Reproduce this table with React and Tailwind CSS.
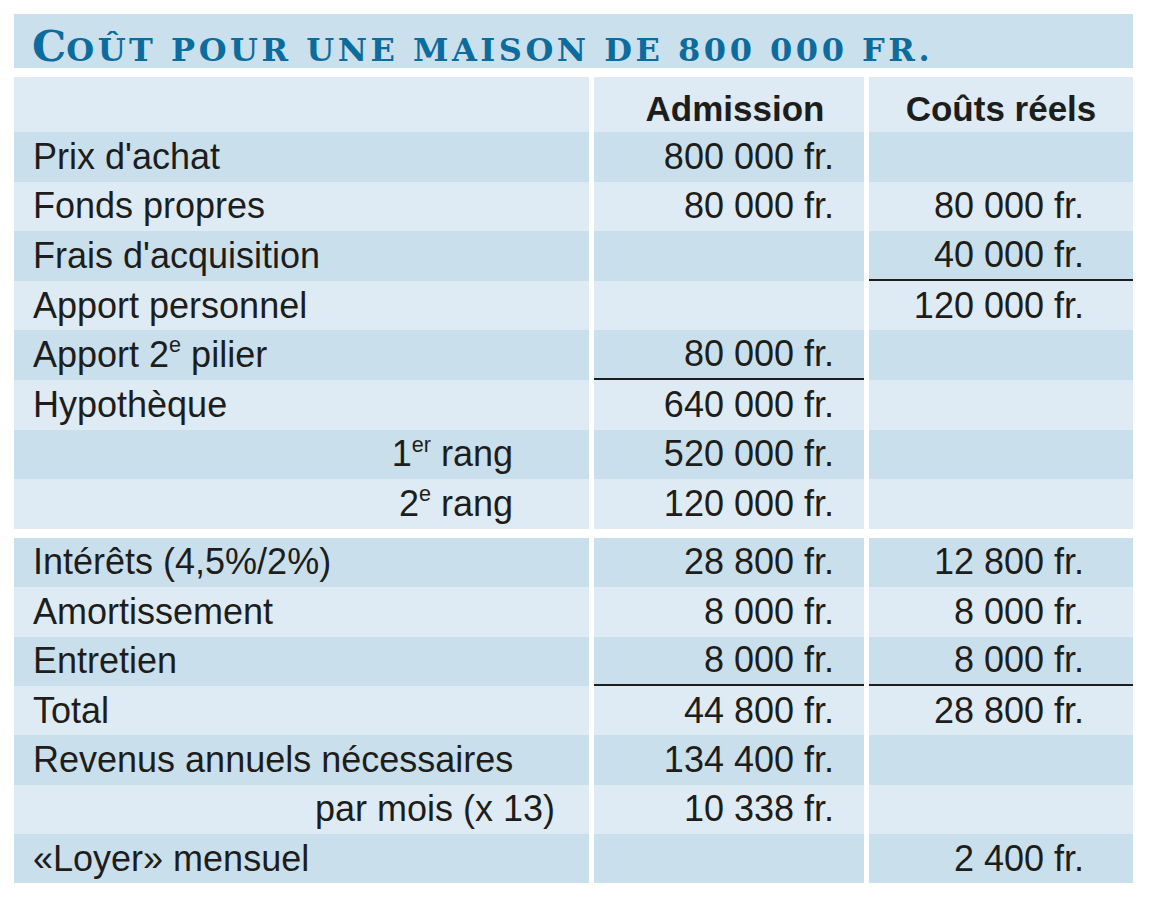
import React from "react";

const dark = "bg-[#c9dfec]";
const light = "bg-[#deebf5]";

const Sup = ({ children }) => (
  <sup className="text-[0.6em] top-[-0.68em]">{children}</sup>
);

const topRows = [
  { label: "Prix d'achat", a: "800 000 fr.", b: "" },
  { label: "Fonds propres", a: "80 000 fr.", b: "80 000 fr." },
  { label: "Frais d'acquisition", a: "", b: "40 000 fr.", lineB: true },
  { label: "Apport personnel", a: "", b: "120 000 fr." },
  {
    label: (
      <>
        Apport 2<Sup>e</Sup> pilier
      </>
    ),
    a: "80 000 fr.",
    b: "",
    lineA: true,
  },
  { label: "Hypothèque", a: "640 000 fr.", b: "" },
  {
    label: (
      <>
        1<Sup>er</Sup> rang
      </>
    ),
    a: "520 000 fr.",
    b: "",
    indent: "pr-[76px]",
  },
  {
    label: (
      <>
        2<Sup>e</Sup> rang
      </>
    ),
    a: "120 000 fr.",
    b: "",
    indent: "pr-[76px]",
  },
];

const bottomRows = [
  { label: "Intérêts (4,5%/2%)", a: "28 800 fr.", b: "12 800 fr." },
  { label: "Amortissement", a: "8 000 fr.", b: "8 000 fr." },
  { label: "Entretien", a: "8 000 fr.", b: "8 000 fr.", lineA: true, lineB: true },
  { label: "Total", a: "44 800 fr.", b: "28 800 fr." },
  { label: "Revenus annuels nécessaires", a: "134 400 fr.", b: "" },
  { label: "par mois (x 13)", a: "10 338 fr.", b: "", indent: "pr-[34px]" },
  { label: "«Loyer» mensuel", a: "", b: "2 400 fr." },
];

const Row = ({ row, bg, h }) => {
  const line = "border-b-2 border-[#1d1d1b]";
  return (
    <>
      <div
        className={`${bg} ${h} flex items-center ${
          row.indent ? `justify-end ${row.indent}` : "pl-[19px]"
        }`}
      >
        <span>{row.label}</span>
      </div>
      <div
        className={`${bg} ${h} flex items-center justify-end pr-[30px] ${
          row.lineA ? line : ""
        }`}
      >
        {row.a}
      </div>
      <div
        className={`${bg} ${h} flex items-center justify-end pr-[49px] ${
          row.lineB ? line : ""
        }`}
      >
        {row.b}
      </div>
    </>
  );
};

export default function App() {
  return (
    <div className="min-h-screen bg-white pt-[14px] pl-[14px]">
      <div className="w-[1119px]">
        <div className="h-[54px] bg-[#cbe0ed] flex items-end pl-[18px] text-[43px] leading-none font-bold text-[#0b6c9e] font-['DejaVu_Serif',serif]">
          <span className="leading-none">
            C
            <span className="text-[32px] tracking-[0.11em]">
              OÛT POUR UNE MAISON DE 800 000 FR.
            </span>
          </span>
        </div>

        <div className="mt-[9px] grid grid-cols-[575px_270px_264px] gap-x-[5px] text-[36px] leading-none text-[#1d1d1b] font-['Liberation_Sans',Arial,sans-serif]">
          <div className={`${light} h-[55px]`}></div>
          <div className={`${light} h-[55px] flex items-end justify-center pb-[6px] font-bold text-[35px] pl-[12px]`}>
            Admission
          </div>
          <div className={`${light} h-[55px] flex items-end justify-center pb-[6px] font-bold text-[35px]`}>
            Coûts réels
          </div>
          {topRows.map((row, i) => (
            <Row key={i} row={row} bg={i % 2 === 0 ? dark : light} h="h-[49.6px]" />
          ))}
        </div>

        <div className="mt-[9px] grid grid-cols-[575px_270px_264px] gap-x-[5px] text-[36px] leading-none text-[#1d1d1b] font-['Liberation_Sans',Arial,sans-serif]">
          {bottomRows.map((row, i) => (
            <Row key={i} row={row} bg={i % 2 === 0 ? dark : light} h="h-[49.4px]" />
          ))}
        </div>
      </div>
    </div>
  );
}
